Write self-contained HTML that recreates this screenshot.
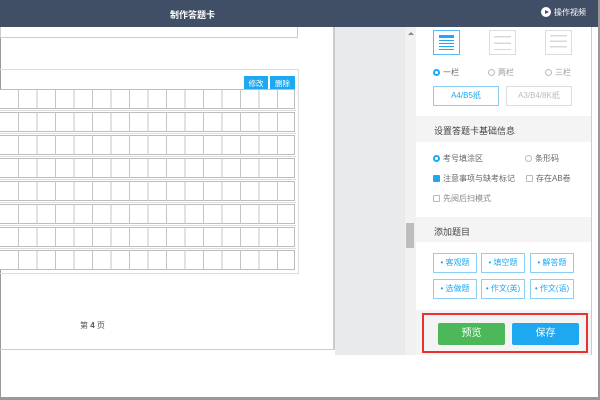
<!DOCTYPE html>
<html><head><meta charset="utf-8"><style>
*{margin:0;padding:0;box-sizing:border-box}
body{width:600px;height:400px;overflow:hidden;background:#fff;font-family:"Liberation Sans","Noto Sans CJK SC",sans-serif;position:relative}
.a{position:absolute}
.hdr{left:0;top:0;width:600px;height:27px;background:#404e66;color:#fff;font-size:9px}
.r{display:inline-block;width:7px;height:7px;border:1px solid #bbb;border-radius:50%;vertical-align:-1px;margin-right:3px}
.r.on{border:2px solid #1ea8f0}
.c{display:inline-block;width:7px;height:7px;border:1px solid #bbb;border-radius:1px;vertical-align:-1px;margin-right:3px}
.c.on{background:#1ea8f0;border-color:#1ea8f0}
.t{font-size:8px;color:#666}
.qb{border:1px solid #8ccff5;color:#1ea8f0;font-size:8px;text-align:center;line-height:18px;height:20px;width:44px}
</style></head><body>
<div class="a hdr"><div class="a" style="left:170px;top:8px;font-weight:bold">制作答题卡</div>
<div class="a" style="left:541px;top:7px;width:10px;height:10px;border-radius:50%;background:#fff"></div>
<div class="a" style="left:545px;top:9.5px;width:0;height:0;border-left:4px solid #404e66;border-top:2.5px solid transparent;border-bottom:2.5px solid transparent"></div>
<div class="a" style="left:554px;top:7px;font-size:8px">操作视频</div></div>
<div class="a" style="left:0;top:27px;width:1px;height:371px;background:#999"></div>
<div class="a" style="left:0;top:27px;width:298px;height:11px;border:1px solid #ccc;border-top:none"></div>
<div class="a" style="left:0;top:69px;width:299px;height:205px;border:1px solid #ddd;border-left:none"></div>
<div class="a" style="left:244px;top:76px;width:24px;height:15px;background:#1ea8f0;color:#fff;font-size:7.5px;text-align:center;line-height:15px">修改</div>
<div class="a" style="left:270px;top:76px;width:25px;height:15px;background:#1ea8f0;color:#fff;font-size:7.5px;text-align:center;line-height:15px">删除</div>
<svg class="a" style="left:0;top:0" width="300" height="280">
<g fill="none" stroke="#bbb" stroke-width="1">
<path id="row" d=""/>
</g>
<g fill="#fff" stroke="#bdbdbd" stroke-width="1">
<rect x="-1" y="89.5" width="295.5" height="19"/><rect x="-1" y="112.5" width="295.5" height="19"/><rect x="-1" y="135.5" width="295.5" height="19"/><rect x="-1" y="158.5" width="295.5" height="19"/><rect x="-1" y="181.5" width="295.5" height="19"/><rect x="-1" y="204.5" width="295.5" height="19"/><rect x="-1" y="227.5" width="295.5" height="19"/><rect x="-1" y="250.5" width="295.5" height="19"/>
</g>
<g stroke="#c4c4c4" stroke-width="1">
<path d="M18.5 89V270M37 89V270M55.5 89V270M74 89V270M92.5 89V270M111 89V270M129.5 89V270M148 89V270M166.5 89V270M185 89V270M203.5 89V270M222 89V270M240.5 89V270M259 89V270M277.5 89V270"/>
</g>
<g stroke="#fff" stroke-width="3"><path d="M0 110.5H296M0 133.5H296M0 156.5H296M0 179.5H296M0 202.5H296M0 225.5H296M0 248.5H296"/></g>
<g stroke="#ddd" stroke-width="1"><path d="M0 110.5H296M0 133.5H296M0 156.5H296M0 179.5H296M0 202.5H296M0 225.5H296M0 248.5H296"/></g>
</svg>
<div class="a t" style="left:80px;top:320px;color:#555">第 <b>4</b> 页</div>
<div class="a" style="left:0;top:349px;width:334px;height:1px;background:#ccc"></div>
<div class="a" style="left:333px;top:27px;width:2px;height:323px;background:#ccc"></div>
<div class="a" style="left:335px;top:27px;width:70px;height:328px;background:#e9eaec"></div>
<div class="a" style="left:405px;top:27px;width:11px;height:328px;background:#f1f1f1"></div>
<div class="a" style="left:406px;top:223px;width:8px;height:25px;background:#bdbdbd"></div>
<div class="a" style="left:408px;top:32px;border-left:3px solid transparent;border-right:3px solid transparent;border-bottom:3px solid #888"></div>
<div class="a" style="left:416px;top:27px;width:176px;height:328px;background:#f4f4f4"></div>
<div class="a" style="left:416px;top:27px;width:175px;height:89px;background:#fff"></div>
<div class="a" style="left:433px;top:30px;width:27px;height:25px;border:1.5px solid #5bbcf5;padding:4px 5px;background:#fff">
<div style="height:3px;background:#1ea8f0;margin-bottom:1.5px"></div><div style="height:1.5px;background:#1ea8f0;margin-bottom:1.5px"></div><div style="height:1.5px;background:#1ea8f0;margin-bottom:1.5px"></div><div style="height:1.5px;background:#1ea8f0;margin-bottom:1.5px"></div><div style="height:1.5px;background:#1ea8f0"></div></div>
<div class="a" style="left:489px;top:30px;width:27px;height:25px;border:1.5px solid #ddd;padding:4px 4px;background:repeating-linear-gradient(#fff 0 5px,#d8d8d8 5px 6.5px);background-clip:content-box"></div>
<div class="a" style="left:545px;top:30px;width:27px;height:25px;border:1.5px solid #ddd;padding:4px 4px;background:repeating-linear-gradient(#fff 0 4px,#d8d8d8 4px 5.5px);background-clip:content-box"></div>
<div class="a t" style="left:433px;top:67px"><span class="r on"></span>一栏</div>
<div class="a t" style="left:488px;top:67px;color:#999"><span class="r"></span>两栏</div>
<div class="a t" style="left:545px;top:67px;color:#999"><span class="r"></span>三栏</div>
<div class="a" style="left:433px;top:86px;width:66px;height:20px;border:1px solid #8ccff5;color:#1ea8f0;font-size:8px;text-align:center;line-height:18px">A4/B5纸</div>
<div class="a" style="left:506px;top:86px;width:66px;height:20px;border:1px solid #ddd;color:#bbb;font-size:8px;text-align:center;line-height:18px">A3/B4/8K纸</div>
<div class="a" style="left:434px;top:124px;font-size:9px;color:#444">设置答题卡基础信息</div>
<div class="a" style="left:416px;top:142px;width:175px;height:75px;background:#fff"></div>
<div class="a t" style="left:433px;top:153px"><span class="r on"></span>考号填涂区</div>
<div class="a t" style="left:525px;top:153px"><span class="r"></span>条形码</div>
<div class="a t" style="left:433px;top:173px"><span class="c on"></span>注意事项与缺考标记</div>
<div class="a t" style="left:526px;top:173px"><span class="c"></span>存在AB卷</div>
<div class="a t" style="left:433px;top:193px;color:#888"><span class="c"></span>先阅后扫模式</div>
<div class="a" style="left:434px;top:225px;font-size:9px;color:#444">添加题目</div>
<div class="a" style="left:416px;top:242px;width:175px;height:68px;background:#fff"></div>
<div class="a qb" style="left:433px;top:253px">• 客观题</div>
<div class="a qb" style="left:481px;top:253px">• 填空题</div>
<div class="a qb" style="left:530px;top:253px">• 解答题</div>
<div class="a qb" style="left:433px;top:279px">• 选做题</div>
<div class="a qb" style="left:481px;top:279px">• 作文(英)</div>
<div class="a qb" style="left:530px;top:279px">• 作文(语)</div>
<div class="a" style="left:591px;top:27px;width:1px;height:328px;background:#ccc"></div>
<div class="a" style="left:422px;top:313px;width:166px;height:40px;border:2px solid #e8322f"></div>
<div class="a" style="left:438px;top:323px;width:67px;height:22px;background:#4cb85a;border-radius:2px;color:#fff;font-size:10px;text-align:center;line-height:22px">预览</div>
<div class="a" style="left:512px;top:323px;width:67px;height:22px;background:#1ea8f0;border-radius:2px;color:#fff;font-size:10px;text-align:center;line-height:22px">保存</div>
<div class="a" style="left:598px;top:0;width:2px;height:400px;background:#999"></div>
<div class="a" style="left:0;top:397px;width:600px;height:3px;background:#999"></div>
</body></html>
